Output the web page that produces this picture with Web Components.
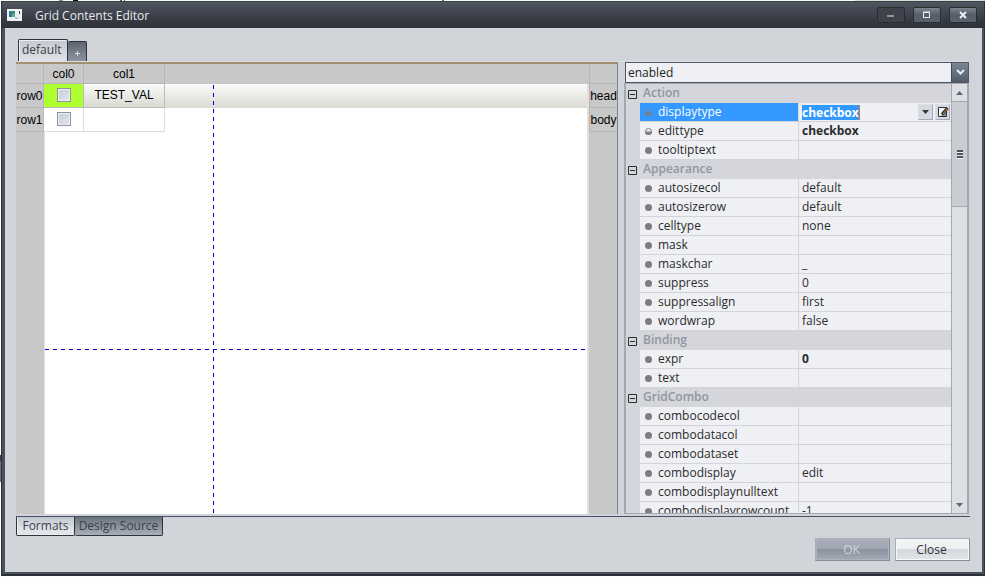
<!DOCTYPE html>
<html lang="en">
<head>
<meta charset="utf-8">
<title>Grid Contents Editor</title>
<style>
html, body { height: 100%; margin: 0; }
body {
  background:
    linear-gradient(#3a3f48, #3a3f48) 0 455px / 1px 6px no-repeat,
    linear-gradient(#6d7480, #6d7480) 0 461px / 1px 21px no-repeat,
    linear-gradient(90deg, #555 0 2px, transparent 2px 4px, #555 4px 5px) 120px 0 / 5px 1px no-repeat,
    linear-gradient(#8a8f8a, #8a8f8a) 59px 0 / 4px 1px no-repeat,
    linear-gradient(#111, #111) 73px 0 / 5px 1px no-repeat,
    linear-gradient(#666, #666) 442px 0 / 2px 1px no-repeat,
    linear-gradient(#d5dcd8, #d5dcd8) 855px 0 / 130px 1px no-repeat,
    #fafcfa;
  font: 12px/18px "Open Sans", "Noto Sans", sans-serif;
  color: #2b2b2b;
  box-sizing: border-box;
  padding: 1px 0 1px 1px;
}
</style>
</head>
<body>
<editor-window>
  <title-bar slot="title">Grid Contents Editor</title-bar>
  <format-tabs slot="tabs"></format-tabs>
  <grid-designer slot="designer"></grid-designer>
  <property-panel slot="properties"></property-panel>
  <view-tabs slot="views"></view-tabs>
  <push-button slot="actions" disabled>OK</push-button>
  <push-button slot="actions">Close</push-button>
</editor-window>

<script>
function define(name, html, setup) {
  customElements.define(name, class extends HTMLElement {
    constructor() {
      super();
      const root = this.attachShadow({ mode: 'open' });
      root.innerHTML = html;
      if (setup) setup(root, this);
    }
  });
}

define('editor-window', `
<style>
:host { display: flex; flex-direction: column; height: 100%; box-sizing: border-box; background: #d1d4d9; border: 1px solid #2c3038; border-top-color: #3a3f48; border-bottom-width: 2px; }
.client { flex: 1; min-height: 0; display: flex; flex-direction: column; padding: 11px 12px 11px 11px; border: solid #4a525e; border-width: 0 2px 2px 3px; }
.tabs { padding-left: 2px; }
.work { flex: 1; min-height: 0; display: flex; border-bottom: 1px solid #465263; padding-bottom: 2px; }
.left { flex: 1; min-width: 0; display: flex; border-top: 2px solid #a09070; }
.split { width: 6px; border-left: 1px solid #7c848f; background: #d1d4da; }
.right { flex: 0 0 346px; display: flex; min-width: 0; }
.actions { display: flex; justify-content: flex-end; gap: 5px; margin-top: 2px; }
</style>
<slot name="title"></slot>
<div class="client">
  <div class="tabs"><slot name="tabs"></slot></div>
  <div class="work">
    <div class="left"><slot name="designer"></slot></div>
    <div class="split"></div>
    <div class="right"><slot name="properties"></slot></div>
  </div>
  <slot name="views"></slot>
  <div class="actions"><slot name="actions"></slot></div>
</div>`);

define('title-bar', `
<style>
:host { display: flex; align-items: center; height: 26px; color: #e8eaee; padding: 0 7px 0 5px; background: linear-gradient(#50565f, #434853 35%, #34383f 75%, #2d3138); }
.name { flex: 1; padding-left: 13px; padding-top: 2px; }
.buttons { display: flex; gap: 8px; }
button { width: 28px; height: 16px; padding: 0; border: 1px solid #282c33; border-radius: 2px; background: linear-gradient(#7b8290, #565c69 50%, #5b616d); display: grid; place-items: center; }
button.off { background: #3d424b; }
svg { display: block; }
</style>
<svg width="15" height="12" viewBox="0 0 15 12" aria-hidden="true"><path fill="#eef1f4" d="M0 0h15v12H0z"/><path fill="#3e8b7b" d="M2 2h6v6H2z"/><path fill="#3970a7" d="M2 2h2v6H2z"/><path fill="#5fae8d" d="M5 5h3v3H5z"/><path fill="#3a3f4a" d="M12 2h1v3h-1z"/><path fill="#bcc4cc" d="M8 8h3v2H8z"/></svg>
<span class="name"><slot></slot></span>
<div class="buttons">
  <button class="off" aria-label="Minimize"><svg width="8" height="8"><path fill="#8b93a3" d="M0 4h7v2H0z"/></svg></button>
  <button aria-label="Maximize"><svg width="8" height="8"><path fill="none" stroke="#eceef2" d="M.5 1.5h6v5h-6zM0 1h7"/></svg></button>
  <button aria-label="Close"><svg width="8" height="8"><path stroke="#eceef2" stroke-width="2" d="M1 1l6 6M7 1L1 7"/></svg></button>
</div>`);

define('format-tabs', `
<style>
:host { display: flex; align-items: flex-end; height: 23px; border-bottom: 1px solid #dddfe0; box-sizing: border-box; }
button { font: inherit; padding: 0; border: 1px solid #2f343c; border-bottom: 0; border-radius: 2px 2px 0 0; box-sizing: border-box; }
.on { width: 50px; height: 22px; padding: 0 4px 2px 3px; text-align: left; color: #3b3f47; background: linear-gradient(#c3c8d1, #e0e2e7); box-shadow: inset 1px 1px #eceef1; }
.add { width: 19px; height: 20px; padding-top: 3px; display: grid; place-items: center; border-left: 0; background: linear-gradient(#5d6471, #8d94a1); }
</style>
<button class="on">default</button><button class="add" aria-label="Add format"><svg width="5" height="5"><path stroke="#d9dce2" d="M0 2.5h5M2.5 0v5"/></svg></button>`);

define('view-tabs', `
<style>
:host { display: flex; height: 19px; }
button { font: inherit; line-height: 16px; padding: 0; border: 1px solid #2f343c; border-top: 0; border-radius: 0 0 2px 2px; color: #3d4148; box-sizing: border-box; }
.on { width: 59px; background: linear-gradient(#c0c6d0, #e0e3e7 65%); box-shadow: inset 1px -1px #eceef1; }
.off { width: 88px; border-left: 0; background: linear-gradient(#69717f, #a9afba); }
</style>
<button class="on">Formats</button><button class="off">Design Source</button>`);

define('push-button', `
<style>
:host { display: block; }
button { font: inherit; width: 75px; height: 23px; padding: 0 2px 0 0; box-sizing: border-box; border: 1px solid #858d9c; border-top-color: #a8adba; border-left-color: #a8adba; color: #2f3238; background: linear-gradient(#f3f4f6, #eeeff2 50%, #d4d7dd 50%, #e3e5e9); box-shadow: inset 0 0 0 1px #f6f7f9; }
button:disabled { color: #d1d4da; background: linear-gradient(#a7acb7, #a1a7b3 50%, #8b919f 50%, #a4aab5); box-shadow: inset 0 0 0 1px #adb2bd; }
</style>
<button><slot></slot></button>`, (root, host) => {
  root.querySelector('button').disabled = host.hasAttribute('disabled');
});

define('grid-designer', `
<style>
:host { flex: 1; display: block; position: relative; min-width: 0; font-family: "Liberation Sans", Arial, sans-serif; color: #000; background: #c8c8c8; }
table { width: 100%; height: 100%; table-layout: fixed; border-collapse: separate; border-spacing: 0; line-height: 16px; }
th, td { padding: 0; font-weight: normal; text-align: center; white-space: nowrap; box-sizing: border-box; }
.h { width: 28px; } .a { width: 40px; } .b { width: 81px; } .g { width: 2px; }
thead tr { height: 20px; } .cells { height: 24px; }
th { border: solid #b5b5b5; border-width: 0 1px 1px 0; }
th.bare { border-right: 0; border-bottom-color: #c8c8c8; }
th.band { border-right: 0; border-left: 1px solid #b5b5b5; }
td { background: #fff; }
.cells td.cell { border: solid #dedede; border-width: 0 1px 1px 0; padding-bottom: 2px; }
.head td { background: linear-gradient(#fafafa, #d9dad2); }
.head td.cell { border-color: #bcbcbc; }
.head td.sel { background: #adff2f; }
td.gap { border: solid #e0e0e0; border-width: 0 1px 0 1px; background: #c8c8c8 !important; }
.rest td.grey { background: #c8c8c8; }
.rest td.first { border-left: 1px solid #e0e0e0; }
input { appearance: none; display: block; margin: 0 auto; width: 14px; height: 14px; border: 1px solid #8f9398; box-shadow: inset 0 0 0 1px #eef1f4; background: linear-gradient(135deg, #c7d0d9, #dfe4e9); }
.vline, .hline { position: absolute; pointer-events: none; }
.vline { left: 197px; top: 21px; bottom: 1px; width: 1px; background: repeating-linear-gradient(#0000c8 0 4px, transparent 4px 8px); }
.hline { left: 29px; right: 30px; top: 285px; height: 1px; background: repeating-linear-gradient(90deg, #0000c8 0 4px, transparent 4px 8px); }
</style>
<table>
  <colgroup><col class="h"><col class="a"><col class="b"><col><col class="g"><col class="h"></colgroup>
  <thead><tr><th></th><th>col0</th><th>col1</th><th class="bare"></th><th class="bare"></th><th class="band"></th></tr></thead>
  <tbody>
    <tr class="cells head"><th>row0</th><td class="cell sel"><input type="checkbox" aria-label="row0 col0"></td><td class="cell">TEST_VAL</td><td></td><td class="gap"></td><th class="band">head</th></tr>
    <tr class="cells"><th>row1</th><td class="cell"><input type="checkbox" aria-label="row1 col0"></td><td class="cell"></td><td></td><td class="gap"></td><th class="band">body</th></tr>
    <tr class="rest"><td class="grey"></td><td class="first" colspan="3"></td><td class="gap"></td><td class="grey"></td></tr>
  </tbody>
</table>
<div class="vline"></div><div class="hline"></div>`);

const groups = [
  ['Action', [['displaytype', 'checkbox', 'edit'], ['edittype', 'checkbox', 'strong'], ['tooltiptext', '']]],
  ['Appearance', [['autosizecol', 'default'], ['autosizerow', 'default'], ['celltype', 'none'], ['mask', ''], ['maskchar', '_'], ['suppress', '0'], ['suppressalign', 'first'], ['wordwrap', 'false']]],
  ['Binding', [['expr', '0', 'strong'], ['text', '']]],
  ['GridCombo', [['combocodecol', ''], ['combodatacol', ''], ['combodataset', ''], ['combodisplay', 'edit'], ['combodisplaynulltext', ''], ['combodisplayrowcount', '-1']]],
];
const dot = '<svg class="dot" width="7" height="7"><circle cx="3.5" cy="3.5" r="3.5" fill="#7d7d7d"/></svg>';
const half = '<svg class="dot" width="7" height="7"><circle cx="3.5" cy="3.5" r="3" fill="none" stroke="#7d7d7d"/><path d="M0 3.5h7a3.5 3.5 0 0 1-7 0z" fill="#7d7d7d"/></svg>';
const rows = groups.map(([title, items]) => `
  <tr class="group"><th colspan="3"><button class="fold" aria-label="Collapse ${title}"><svg width="9" height="9"><path fill="none" stroke="#2e2e2e" d="M.5.5h8v8h-8zM2 4.5h5"/></svg></button>${title}</th></tr>
  ${items.map(([name, value, kind]) => `<tr class="${kind || ''}"><td class="gutter"></td><td class="name">${kind && name !== 'expr' ? half : dot}${name}</td><td class="value">${
    kind === 'edit'
      ? `<div class="editor"><span class="field"><input type="text" aria-label="${name}" value="${value}" size="7"></span><button aria-label="Open list"><svg width="7" height="4"><path fill="#333" d="M0 0h7L3.5 4z"/></svg></button><button aria-label="Edit value"><svg width="12" height="12"><path fill="#f4f4f4" stroke="#30343a" d="M1.5 1.5h8v9h-8z"/><path fill="#8c9098" d="M4 10l5-7v7z"/><path stroke="#30343a" stroke-width="3" d="M5 8.500L10.500 2"/><path stroke="#d8862a" stroke-width="1" d="M6 8L10 3"/></svg></button></div>`
      : value
  }</td></tr>`).join('')}`).join('');

define('property-panel', `
<style>
:host { flex: 1; min-width: 0; display: flex; flex-direction: column; margin-right: 1px; }
.combo { flex: none; display: flex; height: 21px; box-sizing: border-box; border: 1px solid #4b5868; background: #eef0f4; position: relative; margin-left: 1px; }
select { appearance: none; flex: 1; font: inherit; color: #1e1e1e; border: 0; background: none; padding: 0 20px 0 2px; margin: 0; }
.arrow { position: absolute; right: 0; top: 0; bottom: 0; width: 16px; border-left: 1px solid #3f4856; pointer-events: none; display: grid; place-items: center; background: linear-gradient(#7b8492, #545c69); }
.body { flex: 1; min-height: 0; display: flex; overflow: hidden; border: 1px solid #a2a8b4; border-right-width: 2px; border-left-width: 2px; }
.list { flex: 1; min-width: 0; overflow: hidden; background: #d5d6dc; }
table { width: 100%; table-layout: fixed; border-spacing: 0; }
.c0 { width: 14px; } .c1 { width: 159px; }
tr { height: 19px; }
th, td { padding: 0; height: 19px; box-sizing: border-box; line-height: 18px; white-space: nowrap; overflow: hidden; text-align: left; }
th { color: #9095a0; font-weight: 600; line-height: 17px; padding-bottom: 2px; }
.fold { display: inline-block; vertical-align: -2px; width: 9px; height: 9px; padding: 0; margin: 0 6px 0 2px; border: 0; background: none; }
.fold svg { display: block; }
.name, .value { background: #eef0f4; border-bottom: 1px solid #d2d4da; }
.name { padding-left: 5px; border-right: 1px solid #d2d4da; }
.value { padding-left: 3px; }
.strong .value { font-weight: bold; }
.edit .name { background: #3399ff; color: #fff; }
.dot { margin-right: 6px; vertical-align: 0; }
.editor { display: flex; align-items: center; gap: 2px; height: 18px; padding-right: 1px; }
.field { flex: 1; min-width: 0; display: flex; }
input { field-sizing: content; min-width: 0; border: 0; border-right: 1px solid #cc7a20; padding: 0; height: 15px; font: inherit; line-height: 15px; font-weight: bold; color: #fff; background: #3399ff; }
.editor button { flex: none; width: 15px; height: 16px; padding: 0; display: grid; place-items: center; border: 1px solid #a4aab5; border-top-color: #dcdfe5; border-left-color: #dcdfe5; background: #d5d8de; }
.scroll { flex: none; width: 16px; box-sizing: border-box; border-left: 1px solid #a2a8b4; background: #dedfe3; display: flex; flex-direction: column; }
.scroll button { padding: 0; border: 0; flex: none; height: 17px; background: #dedfe3; display: grid; place-items: center; }
.thumb { height: 104px; border: solid #a2a8b4; border-width: 1px 0; background: #c9ccd1; display: grid; place-items: center; }
.track { flex: 1; }
</style>
<div class="combo"><select aria-label="State"><option>enabled</option></select><span class="arrow"><svg width="9" height="7"><path fill="none" stroke="#eceef2" stroke-width="2" d="M1 1l3.500 3.500L8 1"/></svg></span></div>
<div class="body">
  <div class="list"><table><colgroup><col class="c0"><col class="c1"><col></colgroup><tbody>${rows}</tbody></table></div>
  <div class="scroll">
    <button aria-label="Scroll up"><svg width="7" height="4"><path fill="#5d6573" d="M0 4h7L3.500 0z"/></svg></button>
    <div class="thumb"><svg width="6" height="9"><path fill="#4b5361" d="M0 0h6v2H0zM0 3h6v2H0zM0 6h6v2H0z"/><path fill="#f2f3f5" d="M0 2h6v1H0zM0 5h6v1H0zM0 8h6v1H0z"/></svg></div>
    <span class="track"></span>
    <button aria-label="Scroll down"><svg width="7" height="4"><path fill="#5d6573" d="M0 0h7L3.500 4z"/></svg></button>
  </div>
</div>`);
</script>
</body>
</html>
